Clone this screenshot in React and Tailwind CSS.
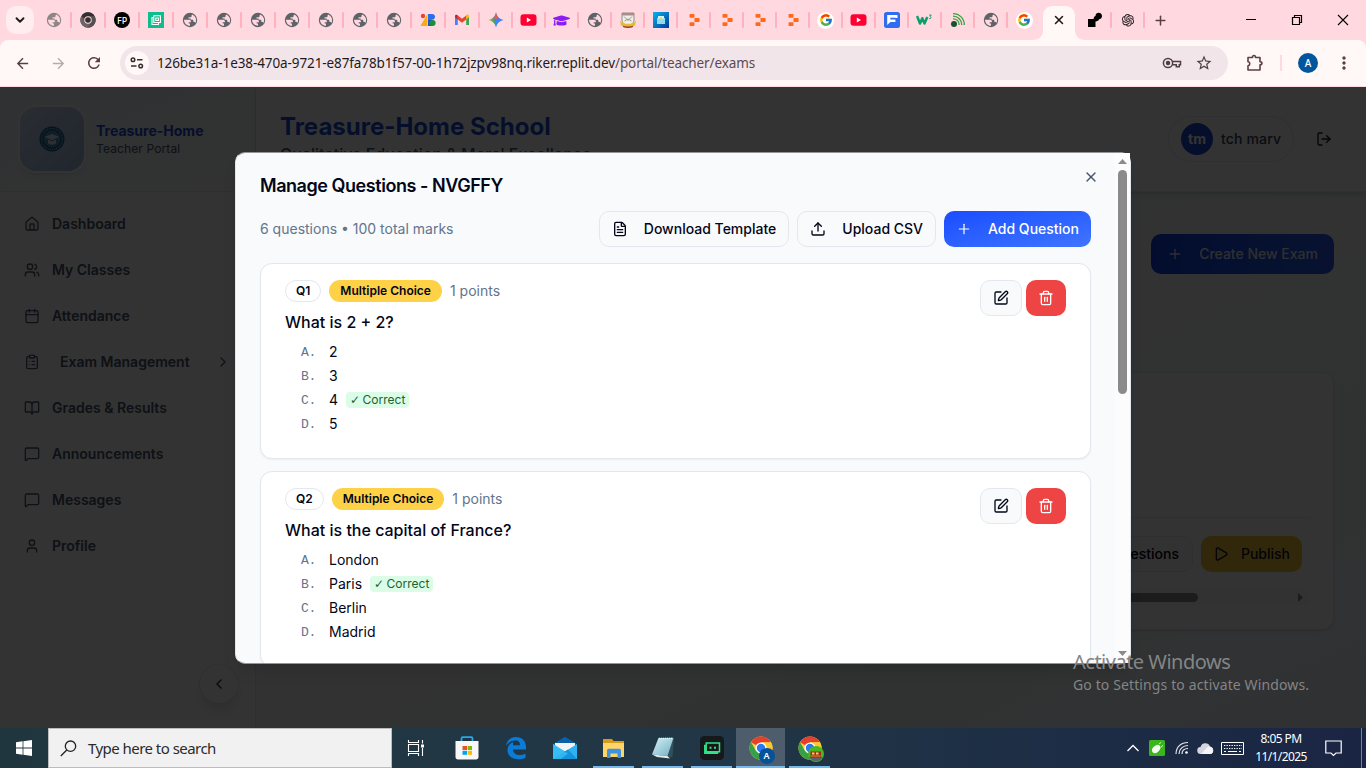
import React from "react";
import {
  House, Users, Calendar, ClipboardList, BookOpen, MessageSquare, User, ChevronLeft, ChevronRight, ChevronDown,
  LogOut, Plus, X, FileText, Upload, SquarePen, Trash2, Play,
} from "lucide-react";
import { FcGoogle } from "react-icons/fc";
import { FaGraduationCap } from "react-icons/fa";
import { AiOutlineOpenAI } from "react-icons/ai";
import { MdArrowBack, MdArrowForward, MdRefresh, MdMoreVert, MdStarBorder } from "react-icons/md";

const Globe = ({ light }) => (
  <svg width="16" height="16" viewBox="0 0 16 16">
    <circle cx="8" cy="8" r="7.200" fill={light ? "#8d8684" : "#5f6368"} />
    <path d="M2 7.800h5c1.100 0 1.900.6 1.900 1.500v.9H6.700v1.300H8v2.300c-3.400 0-6-2.600-6-6z" fill="#ffd8e0" />
    <path d="M10.200 2.500c2.300.9 3.900 3 3.900 5.500 0 1.200-.4 2.400-1.100 3.400v-1.300h-1.600V8.800c0-.7-.5-1.100-1.200-1.100H8.600V6.600H6.500V5.300h1.800c.8 0 1.200-.4 1.200-1.100 0-.8.200-1.200.7-1.700z" fill="#ffd8e0" />
  </svg>
);
const ChromeGlyph = ({ a = "#6a6468", b = "#332e32", c = "#55504f", hub = "#332e32", ring = "#ffd8e0", size = 16 }) => (
  <svg width={size} height={size} viewBox="0 0 24 24">
    <circle cx="12" cy="12" r="11.500" fill={c} />
    <path d="M12 12 2.040 6.250A11.500 11.500 0 0 1 21.960 6.250H12z" fill={b} />
    <path d="M2.040 6.250A11.500 11.500 0 0 0 12 23.500l5-8.600L12 12 7 14.900z" fill={a} />
    <path d="M12 6.250H21.960A11.500 11.500 0 0 1 12 23.500l5-8.600z" fill={c} />
    <circle cx="12" cy="12" r="5.600" fill={ring} />
    <circle cx="12" cy="12" r="4.200" fill={hub} />
  </svg>
);
const FpIcon = () => (
  <span className="flex h-4 w-4 items-center justify-center rounded-full bg-black font-['Noto_Sans',sans-serif] text-[9px] font-medium leading-none text-white">FP</span>
);
const GreenBox = () => (
  <svg width="16" height="16" viewBox="0 0 16 16">
    <rect width="16" height="16" fill="#0fbc8c" />
    <path d="M5.500 5.500H4v7h6.500V11M5.800 3.800h6.600v6.700H5.800zM7.800 6h2.600v2.500H7.800z" fill="none" stroke="#fff" strokeWidth="1.100" />
  </svg>
);
const LensIcon = () => (
  <svg width="16" height="16" viewBox="0 0 16 16">
    <circle cx="3" cy="4" r="2.200" fill="#ea4335" />
    <path d="M7.500 2v12H.8c0-1.200.5-2 1.200-2.700z" fill="#fbab12" />
    <path d="M8 2h4c2 0 3 1.200 3 2.800 0 1.500-1 2.400-1.600 2.800L8 8.500z" fill="#2a6df4" />
    <path d="M8 8h5v6H8z" fill="#1b56c9" />
    <circle cx="12.600" cy="11" r="3" fill="#1e8e3e" />
  </svg>
);
const Gmail = () => (
  <svg width="16" height="16" viewBox="0 0 16 16">
    <path d="M1 4v9h2.800V6.800L1 4z" fill="#4285f4" />
    <path d="M12.200 13H15V4l-2.800 2.800z" fill="#34a853" />
    <path d="M12.200 4v3.500L15 5.200V4c0-1.400-1.700-2-2.800-1z" fill="#fbbc04" />
    <path d="M3.800 7.500V3.500L8 6.700l4.200-3.200v4L8 10.700z" fill="#ea4335" />
    <path d="M1 4v1.200l2.800 2.300V3.300C2.700 2.200 1 2.700 1 4z" fill="#c5221f" />
  </svg>
);
const Gemini = () => (
  <svg width="16" height="16" viewBox="0 0 16 16">
    <defs>
      <linearGradient id="gem" x1="0" y1="0.600" x2="1" y2="0.400">
        <stop offset="0" stopColor="#f5b61b" /><stop offset=".35" stopColor="#4aa35a" /><stop offset=".5" stopColor="#3b86f6" /><stop offset="1" stopColor="#3b82f6" />
      </linearGradient>
    </defs>
    <path d="M8 .5C8.900 4.500 11.500 7.100 15.500 8 11.500 8.900 8.900 11.500 8 15.500 7.100 11.500 4.500 8.900.5 8 4.500 7.100 7.100 4.500 8 .5z" fill="url(#gem)" />
    <path d="M8 .5C8.500 3.200 9.600 4.800 11 6L8 7 5.200 6C6.700 4.800 7.600 3.100 8 .5z" fill="#ee5a4e" />
  </svg>
);
const Crest = () => (
  <svg width="18" height="16" viewBox="0 0 18 16">
    <path d="M3 1h12v7c0 3-3 5-6 6-3-1-6-3-6-6z" fill="#f2efe6" stroke="#777" strokeWidth=".8" />
    <path d="M3 1h12v2.500H3z" fill="#a78f86" />
    <path d="M5 4.500l4 4 4-4M5.500 9l3.500-2 3.500 2" fill="none" stroke="#8a948a" strokeWidth=".9" />
    <path d="M1 8.500c1.500 2.500 4 3.300 8 3.300s6.500-.8 8-3.300L16.300 13c-2 1.700-4.300 2.200-7.300 2.200S3.700 14.700 1.700 13z" fill="#e8bd2d" />
    <path d="M3.500 13.500c3 1.300 8 1.300 11 0l-1 1.800c-3 .9-6 .9-9 0z" fill="#9c2f2f" />
  </svg>
);
const BlueBag = () => (
  <svg width="16" height="16" viewBox="0 0 16 16">
    <defs><linearGradient id="bag" x1="0" y1="0" x2="1" y2="1"><stop offset="0" stopColor="#05b4f0" /><stop offset="1" stopColor="#063a96" /></linearGradient></defs>
    <rect width="16" height="16" fill="url(#bag)" />
    <path d="M4 6h8v6H4z" fill="#8fdcf2" /><path d="M5 4h6v2.500H5z" fill="#d7f4fb" />
    <circle cx="8" cy="6.200" r="1.200" fill="#f2d36b" />
  </svg>
);
const Replit = () => (
  <svg width="16" height="16" viewBox="0 0 16 16" fill="#ff6a1a">
    <rect x="3.500" y="2" width="5" height="3.700" rx=".7" />
    <path d="M8.500 6h4.400c.4 0 .7.3.7.7v2.600c0 .4-.3.7-.7.7H8.500z" />
    <rect x="3.500" y="10.300" width="5" height="3.700" rx=".7" />
  </svg>
);
const Google = () => (
  <span className="flex h-[17px] w-[17px] items-center justify-center rounded-full bg-white"><FcGoogle size={14} /></span>
);
const Youtube = () => (
  <svg width="17" height="16" viewBox="0 0 17 16"><rect x=".5" y="2.200" width="16" height="11.600" rx="3" fill="#ff0033" /><path d="M6.800 5.600 11 8l-4.200 2.400z" fill="#fff" /></svg>
);
const BlueF = () => (
  <svg width="16" height="16" viewBox="0 0 16 16"><rect width="16" height="16" rx="2.500" fill="#2f6df0" /><path d="M3.200 3h10.300v3H6.400v1.400h5v2.500h-5L3.200 13z" fill="#fff" /><path d="M6.400 5.900h5" stroke="#2f6df0" strokeWidth=".5" /></svg>
);
const W3 = () => (
  <svg width="17" height="16" viewBox="0 0 17 16"><path d="M1 4l3 7.500L6.300 6.200 8.500 11.500 11.300 5" fill="none" stroke="#0aa06e" strokeWidth="2.500" strokeLinejoin="round" /><path d="M13 3h2.300l-1.300 1.600c1.600 0 1.600 2.300-.9 2.100" fill="none" stroke="#0aa06e" strokeWidth=".9" /></svg>
);
const Feed = () => (
  <svg width="16" height="16" viewBox="0 0 16 16"><circle cx="4" cy="12" r="3" fill="#14532d" /><path d="M3 6.800c3.600 0 6.200 2.600 6.200 6.200M3 4.200c5 0 8.800 3.800 8.800 8.800M3 1.700c6.500 0 11.300 4.800 11.300 11.300" fill="none" stroke="#3aa23f" strokeWidth="1.300" /></svg>
);
const BlackBlob = () => (
  <svg width="16" height="16" viewBox="0 0 16 16"><path d="M1 7h5.500c.3-1.800 1-2.700 2-3 .1-2 1.400-3.200 3.200-3.200 2 0 3.300 1.300 3.300 3.200 0 2-1.200 3.200-3 3.300-.3 1.400-1.500 2.100-3.500 2.200V15H1z" fill="#000" /></svg>
);

const G = () => <Globe />;
const wideTabs = [() => <Globe light />, ChromeGlyph, FpIcon, GreenBox, G, G, G, G, G, G, G, LensIcon, Gmail];
const tabs = [
  Gemini, Youtube, () => <FaGraduationCap size={17} color="#8b1cf5" />, G, Crest, BlueBag, Replit, Replit, Replit, Replit,
  Google, Youtube, BlueF, W3, Feed, G,
];

const Sep = () => <span className="absolute -right-px top-3 h-4 w-0.5 rounded bg-[#ffb1c0]" />;

const TabStrip = () => (
  <div className="flex h-10 shrink-0 bg-[#ffd8e0]">
    <div className="flex w-[37px] shrink-0 items-center pl-1.5">
      <div className="flex h-7 w-7 items-center justify-center rounded-[10px] bg-[#ffedf0] text-[#1f1a1b]"><ChevronDown size={14} strokeWidth={3.200} /></div>
    </div>
    {wideTabs.map((I, i) => <div key={i} className="relative flex w-[34px] shrink-0 items-center justify-center"><I /><Sep /></div>)}
    {tabs.map((I, i) => <div key={i} className="relative flex w-[33px] shrink-0 items-center justify-center"><I /><Sep /></div>)}
    <div className="flex w-[34px] shrink-0 items-center justify-center"><Google /></div>
    <div className="relative mt-1.5 flex w-[37px] shrink-0 justify-center">
      <svg className="absolute -left-2 top-0" width="52" height="34" viewBox="0 0 52 34"><path d="M0 34c6 0 10-4 10-10V10C10 4 14 0 20 0h12c6 0 10 4 10 10v14c0 6 4 10 10 10z" fill="#fff8f7" /></svg>
      <X className="relative mr-0.5 mt-[7px] text-[#1f1a1b]" size={14} strokeWidth={2.600} />
    </div>
    <div className="relative flex w-[33px] shrink-0 items-center justify-center"><BlackBlob /><Sep /></div>
    <div className="relative flex w-[33px] shrink-0 items-center justify-center"><AiOutlineOpenAI size={16} color="#2b2326" /><Sep /></div>
    <div className="flex w-[33px] shrink-0 items-center justify-center text-[#5c3f45]"><Plus size={15} strokeWidth={2.400} /></div>
    <div className="flex flex-1 items-center justify-end pr-3.5">
      <svg width="108" height="12" viewBox="0 0 108 12" fill="none" stroke="#000" className="w-[108px]">
        <path d="M2 5.500h10" />
        <path d="M48.500 3.500h7v7h-7zM50.500 3.500v-2h7v7h-2" strokeWidth="1.200" />
        <path d="M94 1l10 10M104 1l-10 10" strokeWidth="1.100" />
      </svg>
    </div>
  </div>
);

const Toolbar = () => (
  <div className="flex h-[47px] shrink-0 items-center border-b border-[#ffd8e0] bg-[#ffd8e0]">
    <div className="flex h-full w-full items-center rounded-t-lg bg-[#fff8f7] text-[#5c3f45]">
      <div className="flex w-[120px] shrink-0 items-center pl-[13.500px]">
        <MdArrowBack size={17} className="mr-[19px]" />
        <MdArrowForward size={17} className="mr-[18.500px] text-[#b9a9ab]" />
        <MdRefresh size={18} />
      </div>
      <div className="flex h-[34px] w-[1108px] shrink-0 items-center rounded-full bg-[#f2e5e9] pl-[5px]">
        <div className="flex h-6 w-6 items-center justify-center rounded-full bg-[#fff8f7]">
          <svg width="14" height="12" viewBox="0 0 14 12" fill="none" stroke="#3a2c2f" strokeWidth="1.500"><circle cx="3" cy="2.800" r="1.800" /><path d="M7 2.800h5.500M1 9h5.500" /><circle cx="10.700" cy="9" r="1.800" /></svg>
        </div>
        <div className="ml-2 flex-1 whitespace-nowrap font-['Noto_Sans',sans-serif] text-[13.500px] text-[#1f1a1b]"><span className="tracking-[-0.100px]">126be31a-1e38-470a-9721-e87fa78b1f57-00-1h72jzpv98nq.riker.replit.dev<span className="text-[#5a4a4e]">/portal/teacher/exams</span></span></div>
        <svg width="20" height="12" viewBox="0 0 20 12" fill="none" stroke="#4f3e42" strokeWidth="1.500" className="mr-[13px]"><circle cx="6" cy="6" r="4.600" /><circle cx="6" cy="6" r="1.500" fill="#4f3e42" /><path d="M10.500 4.500h8v3.300h-1.200v2h-3v-2h-4" /></svg>
        <MdStarBorder size={18} className="mr-[15px] text-[#4f3e42]" />
      </div>
      <div className="ml-[17px] flex h-5 w-5 items-center justify-center">
        <svg width="18" height="18" viewBox="0 0 18 18" fill="none" stroke="#5c3f45" strokeWidth="1.600" strokeLinejoin="round"><path d="M2 3.500h4.500c0-2.600 3-2.600 3 0H14v4.300c2.600 0 2.600 3 0 3V16H2v-4.200c2.400-.3 2.400-3.700 0-4z" /></svg>
      </div>
      <div className="ml-[15px] h-4 w-0.5 bg-[#ffd8e0]" />
      <div className="ml-[16px] flex h-5 w-5 items-center justify-center rounded-full bg-[#04569c] font-['Noto_Sans',sans-serif] text-[10px] font-medium text-white">A</div>
      <MdMoreVert size={20} className="ml-4 text-[#5c3f45]" />
    </div>
  </div>
);

const navItems = [
  [House, "Dashboard"], [Users, "My Classes"], [Calendar, "Attendance"], [ClipboardList, "Exam Management", true],
  [BookOpen, "Grades & Results"], [MessageSquare, "Announcements"], [MessageSquare, "Messages"], [User, "Profile"],
];

const Sidebar = () => (
  <aside className="relative flex w-64 shrink-0 flex-col border-r border-slate-200 bg-white">
    <div className="flex h-[105px] items-center border-b border-slate-200 bg-gradient-to-br from-[#f1f5fb] to-[#f3f9f6] pl-5">
      <div className="flex h-16 w-16 items-center justify-center rounded-2xl bg-gradient-to-br from-[#cfdff8] to-[#a5bce6] shadow-md ring-2 ring-white">
        <svg width="26" height="26" viewBox="0 0 26 26"><circle cx="13" cy="13" r="12.500" fill="#1d5f94" /><circle cx="13" cy="13" r="10.500" fill="none" stroke="#a8cbe2" strokeWidth="1.200" strokeDasharray="1.200 1" /><circle cx="13" cy="13" r="8.500" fill="#4a8fbd" /><path d="M5.500 11 13 8l7.500 3-7.500 3zM9 13.500v4c2.500 1.500 5.500 1.500 8 0v-4l-4 1.700z" fill="#dff0fa" /></svg>
      </div>
      <div className="ml-3 pt-px">
        <div className="text-sm font-bold leading-[18px] text-[#1d4ed8]">Treasure-Home</div>
        <div className="text-xs leading-[17px] tracking-[0.120px] text-slate-600">Teacher Portal</div>
      </div>
    </div>
    <nav className="mt-[9px] flex flex-col">
      {navItems.map(([I, label, sub]) => (
        <div key={label} className="flex h-[46px] items-center pl-6 text-sm font-semibold text-slate-600">
          <I size={16} />
          <span className={sub ? "ml-5" : "ml-3"}>{label}</span>
          {sub && <ChevronRight size={16} className="ml-auto mr-6" />}
        </div>
      ))}
    </nav>
    <div className="absolute bottom-6 right-4 flex h-10 w-10 items-center justify-center rounded-full border border-slate-200 bg-white text-slate-700 shadow-lg"><ChevronLeft size={16} strokeWidth={2.400} /></div>
  </aside>
);

const Main = () => (
  <div className="flex min-w-0 flex-1 flex-col">
    <header className="relative flex h-[105px] shrink-0 justify-between border-b border-slate-200 bg-white pl-6 pr-[34px] pt-6 shadow-md">
      <div>
        <h1 className="text-2xl font-bold leading-8 text-[#1d4ed8]">Treasure-Home School</h1>
        <p className="text-base font-medium leading-[22px] text-slate-600">Qualitative Education &amp; Moral Excellence</p>
      </div>
      <div className="mt-[5px] flex h-[46px] items-center">
        <div className="flex h-[46px] w-[126px] items-center rounded-full border border-slate-200 bg-white pl-3">
          <div className="flex h-8 w-8 items-center justify-center rounded-full bg-[#1d4ed8] text-sm font-bold text-white">tm</div>
          <span className="ml-2 text-sm font-medium tracking-[0.150px] text-slate-700">tch marv</span>
        </div>
        <LogOut size={16} className="ml-[22px] text-slate-900" />
      </div>
    </header>
    <div className="flex flex-1 flex-col items-end bg-gradient-to-br from-slate-50 via-[#f3faf6] to-blue-50 pr-8 pt-[42px]">
      <button className="flex h-10 shrink-0 items-center gap-4 rounded-[10px] bg-gradient-to-r from-[#0f3fe6] to-[#2a5cf0] px-4 text-sm font-medium text-slate-200"><Plus size={16} />Create New Exam</button>
      <div className="mt-[98px] flex h-[258px] w-full shrink-0 flex-col rounded-xl border border-slate-200 bg-white pr-6 shadow-sm">
        <div className="h-[145px] shrink-0 border-b border-slate-200" />
        <div className="mt-[18px] flex justify-end gap-2 pr-[7px]">
          <button className="flex h-9 items-center rounded-[10px] border border-slate-200 bg-slate-50 px-[13px] text-sm font-medium">Manage Questions</button>
          <button className="flex h-9 items-center gap-3 rounded-[10px] bg-[#f5c53a] px-3 text-sm font-medium text-slate-900"><Play size={16} />Publish</button>
        </div>
        <div className="mt-[18px] flex h-[15px] items-center justify-between bg-slate-50 pr-1.5">
          <div className="h-[9px] w-[941px] rounded-full bg-[#8b8b8b]" />
          <svg width="5" height="9" viewBox="0 0 5 9"><path d="M0 0l5 4.500L0 9z" fill="#8b8b8b" /></svg>
        </div>
      </div>
    </div>
  </div>
);

const questions = [
  { text: "What is 2 + 2?", options: ["2", "3", "4", "5"], correct: 2 },
  { text: "What is the capital of France?", options: ["London", "Paris", "Berlin", "Madrid"], correct: 1 },
];

const Question = ({ q, n }) => (
  <div className="flex h-[196px] shrink-0 justify-between rounded-xl border border-slate-200 bg-white px-6 pt-4 shadow-[0_1px_2px_rgba(0,0,0,0.06)]">
    <div>
      <div className="flex h-[22px] items-center gap-2">
        <span className="flex h-[22px] items-center rounded-full border border-slate-200 px-2.5 text-xs font-semibold text-slate-950">Q{n}</span>
        <span className="flex h-[22px] items-center rounded-full bg-[#ffd147] px-[11px] text-xs font-semibold text-slate-950">Multiple Choice</span>
        <span className="text-sm text-slate-500">1 points</span>
      </div>
      <p className="mt-2 text-base font-medium text-slate-950">{q.text}</p>
      <div className="ml-4 mt-2 flex flex-col gap-1">
        {q.options.map((o, i) => (
          <div key={o} className="flex h-5 items-center gap-2 text-sm text-slate-950">
            <span className="w-5 pt-0.5 font-['Liberation_Mono',monospace] text-[13px] tracking-[-0.400px] text-slate-500">{"ABCD"[i]}.</span>
            <span>{o}</span>
            {q.correct === i && <span className="flex h-4 items-center rounded bg-green-100 px-1 text-xs text-[#166534]"><span className="mr-[3px] w-[9.500px] font-['DejaVu_Sans',sans-serif]">✓</span>Correct</span>}
          </div>
        ))}
      </div>
    </div>
    <div className="flex gap-1">
      <button className="flex h-9 w-[42px] items-center justify-center rounded-[10px] border border-slate-200 bg-slate-50 text-slate-950"><SquarePen size={16} /></button>
      <button className="flex h-9 w-10 items-center justify-center rounded-[10px] bg-[#ef4444] text-white"><Trash2 size={16} /></button>
    </div>
  </div>
);

const Dialog = () => (
  <div className="absolute left-[235px] top-[65px] flex h-[512px] w-[896px] rounded-[10px] border border-slate-200 border-y-[#929496] bg-slate-50 shadow-lg">
    <div className="relative flex flex-1 flex-col overflow-hidden rounded-l-[10px] px-6 pt-6">
      <h2 className="text-lg font-semibold leading-[18px] tracking-[-0.450px] text-slate-950">Manage Questions - NVGFFY</h2>
      <X size={16} className="absolute right-4 top-4 text-slate-600" />
      <div className="mt-4 flex h-9 shrink-0 items-center gap-2">
        <span className="mr-auto text-sm text-slate-500">6 questions • 100 total marks</span>
        <button className="flex h-9 items-center gap-4 rounded-[10px] border border-slate-200 bg-slate-50 px-3 text-sm font-medium text-slate-950"><FileText size={16} />Download Template</button>
        <button className="flex h-9 items-center gap-4 rounded-[10px] border border-slate-200 bg-slate-50 px-3 text-sm font-medium text-slate-950"><Upload size={16} />Upload CSV</button>
        <button className="flex h-9 items-center gap-4 rounded-[10px] bg-gradient-to-br from-[#1a4cff] to-[#4074ff] px-3 text-sm font-medium text-white"><Plus size={16} strokeWidth={1.800} />Add Question</button>
      </div>
      <div className="mt-4 flex flex-col gap-3">
        {questions.map((q, i) => <Question key={q.text} q={q} n={i + 1} />)}
      </div>
    </div>
    <div className="flex w-[15px] shrink-0 flex-col items-center justify-between bg-[#fcfcfc] pb-[7px] pt-1.5">
      <div className="flex flex-col items-center gap-1.5">
        <svg width="9" height="5" viewBox="0 0 9 5"><path d="M4.500 0 9 5H0z" fill="#8b8b8b" /></svg>
        <div className="h-[224px] w-[9px] rounded-full bg-[#8b8b8b]" />
      </div>
      <svg width="9" height="5" viewBox="0 0 9 5"><path d="M4.500 5 9 0H0z" fill="#8b8b8b" /></svg>
    </div>
  </div>
);

const Store = () => (
  <svg width="24" height="24" viewBox="0 0 24 24"><path d="M6.500 6V2.500c0-.8.500-1.300 1.300-1.300h8.400c.8 0 1.300.5 1.300 1.300V6" fill="none" stroke="#2aa7e8" strokeWidth="1.800" /><path d="M.5 5h23v16c0 1.400-1 2.500-2.500 2.500H3C1.500 23.500.5 22.400.5 21z" fill="#f7f7f7" /><path d="M7.500 10H12v4H7.500z" fill="#f25022" /><path d="M12.700 10h4.300v4h-4.300z" fill="#7fba00" /><path d="M7.500 14.800H12v4H7.500z" fill="#00a4ef" /><path d="M12.700 14.800h4.300v4h-4.300z" fill="#ffb900" /></svg>
);
const Edge = () => (
  <svg width="22" height="24" viewBox="0 0 22 24"><path d="M1 10C2 4 6 1 11 1c6 0 10 4 10 10v2.500H8c.1 3.500 3 5.500 6.500 5.500 2.300 0 4-.5 6-1.600v4.300C18.500 22.700 16 23.300 13.300 23.300c-6.500 0-10.800-3.800-10.800-9.300 0-3.500 1.800-6.300 5-7.800C8.300 5.800 8 7.500 8 9.300h7c0-2.800-1.300-4.800-4.800-4.800C6.300 4.500 3 6.700 1 10z" fill="#0b7bd8" /></svg>
);
const Mail = () => (
  <svg width="26" height="24" viewBox="0 0 26 24"><path d="M1 8 13 .8 25 8v4H1z" fill="#0d5fa8" /><path d="M3 7h20v8H3z" fill="#f3f3f3" /><path d="M1 8l12 7.500L25 8v15H1z" fill="#2fb3f0" /><path d="M1 23 16 13.600 25 23z" fill="#1593dc" /><path d="m1 8 15 9.500L9 23H1z" fill="#39c3f5" opacity=".7" /></svg>
);
const Folder = () => (
  <svg width="23" height="21" viewBox="0 0 23 21"><path d="M1 1h9l1.500 2H22v4H1z" fill="#d99a17" /><path d="M1 5h21v14H1z" fill="#ffd569" /><path d="M5 20v-7.500c0-1 .7-1.700 1.700-1.700h10.600c1 0 1.700.7 1.700 1.700V20h-3.500v-4.500h-7V20z" fill="#3f93dc" /></svg>
);
const Notepad = () => (
  <svg width="24" height="24" viewBox="0 0 24 24"><defs><linearGradient id="np" x1="0" y1="0" x2="1" y2="1"><stop offset="0" stopColor="#d8f1f5" /><stop offset="1" stopColor="#6fb0c3" /></linearGradient></defs><path d="M18 3l5-.5L21.500 21l-5 .5z" fill="#32505c" /><path d="M7.500 2l15-.3L16.500 20 1 18.500z" fill="url(#np)" /><path d="M1 18.500 16.500 20l2.500 2.500-13-1.500z" fill="#e8e8e8" /><path d="M8 2.500h13.500" stroke="#eef" strokeWidth="1.500" strokeDasharray="1 1" /></svg>
);
const GreenBot = () => (
  <svg width="24" height="24" viewBox="0 0 24 24"><rect width="24" height="24" rx="4.500" fill="#16181a" /><path d="M6.200 7h13.300v8.700H6.200zM6 9.500H4.800v7.800H17.500V15.700" fill="none" stroke="#2de28a" strokeWidth="1.500" /><path d="M9.500 10.800h2v2h-2zM14 10.800h2v2h-2z" fill="#2de28a" /></svg>
);
const ChromeColor = () => <ChromeGlyph a="#34a047" b="#e5402f" c="#fcc934" hub="#2c78f0" ring="#fff" size={24} />;

const taskButtons = [
  [Store], [Edge], [Mail], [Folder, "line"], [Notepad, "line"], [GreenBot, "line"],
  [() => <div className="relative"><ChromeColor /><span className="absolute -bottom-1 left-2.5 flex h-4 w-4 items-center justify-center rounded-full bg-[#04529a] text-[9px] font-semibold text-white">A</span></div>, "active"],
  [() => <div className="relative"><ChromeColor /><svg className="absolute -bottom-0.5 left-2.5" width="16" height="16" viewBox="0 0 16 16"><circle cx="8" cy="8" r="8" fill="#49b81f" /><path d="M1 11h14a8 8 0 0 1-14 0z" fill="#59636b" /><path d="M2.500 5.500h10.500v6H2.500z" fill="#9a2f19" /><path d="M4 6.500h2.500v2H4zM8 6.500h2.500v2H8z" fill="#f4d36a" /><path d="M3 10h9.500" stroke="#e59020" /></svg></div>, "line"],
];

const Taskbar = () => (
  <div className="flex h-10 shrink-0 bg-gradient-to-r from-[#20363f] via-[#213746] to-[#1a2544] font-['Noto_Sans',sans-serif] text-white">
    <div className="flex w-12 shrink-0 items-center justify-center">
      <svg width="16" height="16" viewBox="0 0 16 16" fill="#fff"><path d="M0 2.300 6.600 1.300v6.300H0zM7.400 1.200 16 0v7.600H7.400zM0 8.400h6.600v6.300L0 13.700zM7.400 8.400H16V16l-8.600-1.200z" /></svg>
    </div>
    <div className="flex w-[344px] shrink-0 items-center border border-[#bcbcbc] bg-[#f1f1f1] pl-[11px]">
      <svg width="17" height="17" viewBox="0 0 17 17" fill="none" stroke="#222" strokeWidth="1.300"><circle cx="10.500" cy="6.200" r="5.200" /><path d="M6.800 10 .8 16" /></svg>
      <span className="ml-[11px] text-[15px] tracking-[-0.540px] text-[#2b2b2b]">Type here to search</span>
    </div>
    <div className="flex w-[50px] shrink-0 items-center pl-[15px]">
      <svg width="18" height="16" viewBox="0 0 18 16" fill="none" stroke="#fff" strokeWidth="1.100"><path d="M1.500 4.500h10v7h-10zM1.500 0v2.500h10V0M1.500 16v-2.500h10V16M15.500 0v3.500M15.500 8v8" /><path d="M14 4.500h3v3h-3z" fill="#fff" stroke="none" /></svg>
    </div>
    {taskButtons.map(([I, state], i) => (
      <div key={i} className={state === "active" ? "relative flex w-[49px] shrink-0 items-center justify-center bg-[#4d5d6b]" : "relative flex w-[49px] shrink-0 items-center justify-center"}>
        <I />
        {state && <span className={state === "active" ? "absolute inset-x-0 bottom-0 h-0.5 bg-[#76b9ed]" : "absolute inset-x-1 bottom-0 h-0.5 bg-[#76b9ed]"} />}
      </div>
    ))}
    <div className="ml-auto flex shrink-0 items-center">
      <svg width="12" height="8" viewBox="0 0 12 8" fill="none" stroke="#fff" strokeWidth="1.300"><path d="M.5 7 6 1.500 11.500 7" /></svg>
      <svg className="ml-2.5" width="16" height="16" viewBox="0 0 16 16"><rect width="16" height="16" rx="1.500" fill="#39b61b" /><ellipse cx="7.200" cy="9" rx="4.800" ry="3.200" transform="rotate(-42 7.200 9)" fill="#f4fbef" /><path d="M10 4l2-1.500M12 7l2-1.500" stroke="#d9f5cf" /></svg>
      <svg className="ml-2.5" width="14" height="14" viewBox="0 0 14 14" fill="none" stroke="#e5e8ec" strokeWidth="1.200"><path d="M1 13C1 6 6 1.500 13 1.500M4 13c0-5 4-8.500 9-8.500M7 13c0-3.500 2.500-5.500 6-5.500" /><circle cx="11.500" cy="11.500" r="1.300" fill="#fff" stroke="none" /></svg>
      <svg className="ml-2" width="17" height="13" viewBox="0 0 17 13"><path d="M4 12a3.500 3.500 0 0 1-.5-7A5 5 0 0 1 13 4.500a3.800 3.800 0 0 1 .2 7.500z" fill="#d3d6dc" /><path d="M4 12 11 4.500c2-.5 5 .8 5 4S14 12 13 12z" fill="#f3f4f6" /></svg>
      <svg className="ml-[7px]" width="23" height="13" viewBox="0 0 23 13" fill="none" stroke="#fff"><path d="M.5.500h22v12H.5z" /><path d="M3 3.500h18M3 6.500h18" strokeWidth="1.200" strokeDasharray="1.300 1.200" /><path d="M3 9.500h2M7 9.500h9M18 9.500h2" strokeWidth="1.200" /></svg>
      <div className="ml-[9px] flex w-[56px] flex-col items-center text-[12px] leading-[18px]">
        <span className="whitespace-nowrap tracking-[-0.600px]">8:05 PM</span>
        <span className="whitespace-nowrap tracking-[-0.600px]">11/1/2025</span>
      </div>
      <svg className="ml-4" width="17" height="17" viewBox="0 0 17 17" fill="none" stroke="#fff" strokeWidth="1.200"><path d="M.8 1h15.400v12H11l-2.500 2.500L6 13H.8z" /></svg>
      <div className="ml-[19px] mr-1 h-10 w-px bg-[#76808f]" />
    </div>
  </div>
);

export default function App() {
  return (
    <div className="flex h-screen w-full flex-col overflow-hidden font-[Inter,sans-serif]">
      <TabStrip />
      <Toolbar />
      <div className="relative flex min-h-0 flex-1 overflow-hidden">
        <Sidebar />
        <Main />
        <div className="absolute inset-0 bg-black/80" />
        <Dialog />
        <div className="absolute left-[1073px] top-[562px] whitespace-nowrap font-['Noto_Sans',sans-serif] text-[#848586]">
          <div className="text-[20px] leading-[26px] tracking-[-0.500px]">Activate Windows</div>
          <div className="text-[14px] leading-5 tracking-[0.120px]">Go to Settings to activate Windows.</div>
        </div>
      </div>
      <Taskbar />
    </div>
  );
}
